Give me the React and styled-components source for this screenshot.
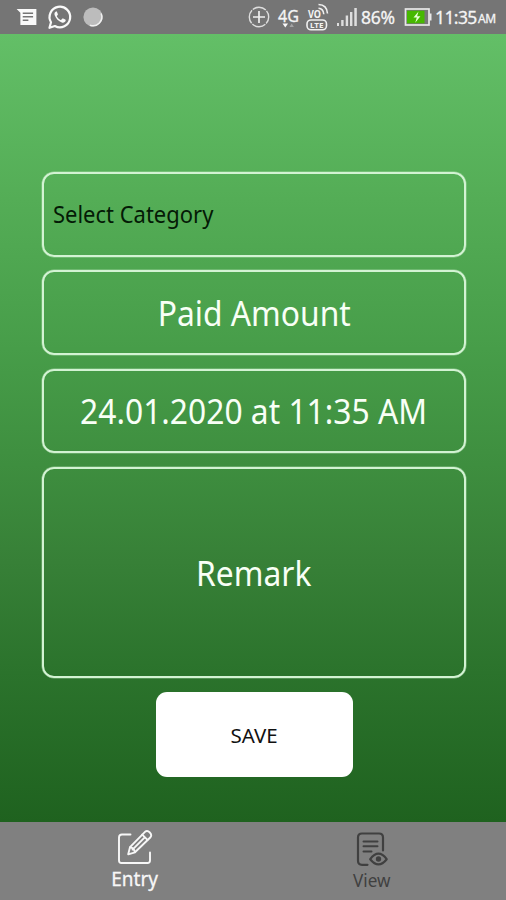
import React from "react";
import styled, { createGlobalStyle } from "styled-components";

const GlobalStyle = createGlobalStyle`
  * {
    box-sizing: border-box;
  }
  body {
    margin: 0;
    font-family: "Noto Sans", "Open Sans", sans-serif;
  }
`;

let Screen = styled.div`
  width: 506px;
  height: 900px;
  display: flex;
  flex-direction: column;
  overflow: hidden;
  background: #808080;
`;

let StatusBar = styled.header`
  height: 34px;
  flex: none;
  display: flex;
  align-items: center;
  justify-content: space-between;
  padding: 0 10px 0 16px;
  background: #757575;
  color: #f4f4f4;
  svg {
    display: block;
    flex: none;
    overflow: visible;
  }
`;

let Notifications = styled.div`
  display: flex;
  align-items: center;
  gap: 11px;
`;

let SystemIcons = styled.div`
  display: grid;
  grid-template-columns: 30px 28px 31px 24px 43px 31px 43px 18px;
  align-items: center;
`;

let StatusText = styled.span`
  font-size: ${(props) => props.$size || 17.5}px;
  line-height: 24px;
  padding-top: ${(props) => props.$top || 0}px;
  letter-spacing: ${(props) => props.$spacing || 0}px;
  white-space: nowrap;
  -webkit-text-stroke: 0.3px currentColor;
`;

let Form = styled.main`
  height: 788px;
  flex: none;
  display: flex;
  flex-direction: column;
  align-items: center;
  gap: 13.9px;
  padding: 138px 0 0 2px;
  background: linear-gradient(
    #63bf67 0%,
    #54ad56 21%,
    #479d49 40%,
    #3f9040 53%,
    #378037 67%,
    #2b732c 81%,
    #1f621f 100%
  );
`;

let Field = styled.div`
  width: 424px;
  height: ${(props) => props.$height || 84.5}px;
  flex: none;
  display: flex;
  align-items: center;
  justify-content: ${(props) => (props.$left ? "flex-start" : "center")};
  padding-left: ${(props) => props.$left || 0}px;
  border: 2px solid #d3f3d3;
  border-radius: 12px;
  box-shadow: 0 0 0 0.5px rgba(211, 243, 211, 0.5);
`;

let FieldText = styled.span`
  color: ${(props) => (props.$dark ? "#041a06" : "#f8fff6")};
  font-size: ${(props) => (props.$dark ? 23.5 : 34)}px;
  line-height: 40px;
  white-space: nowrap;
  transform: scaleX(0.935);
  transform-origin: ${(props) => (props.$dark ? "left" : "center")};
`;

let SaveButton = styled.button`
  width: 197px;
  height: 85px;
  flex: none;
  padding: 0;
  border: none;
  border-radius: 11px;
  background: #fff;
  color: #111;
  font-family: inherit;
  font-size: 20.5px;
`;

let TabBar = styled.nav`
  height: 78px;
  flex: none;
  display: flex;
  padding: 0 16px;
  background: #808080;
`;

let Tab = styled.div`
  flex: 1;
  display: flex;
  flex-direction: column;
  align-items: center;
  padding-top: ${(props) => (props.$active ? 6 : 7)}px;
  color: ${(props) => (props.$active ? "#f7f7f7" : "#404040")};
  svg {
    display: block;
  }
`;

let TabLabel = styled.span`
  margin-top: ${(props) => props.$top}px;
  font-size: ${(props) => props.$size}px;
  line-height: 24px;
  transform: scaleX(0.95);
  -webkit-text-stroke: ${(props) => props.$stroke || 0}px currentColor;
`;

let IconLabel = styled.text`
  font-family: "Noto Sans", sans-serif;
  font-weight: 700;
  fill: currentColor;
`;

function MessageIcon() {
  return (
    <svg width="21" height="16" viewBox="0 0 21 17">
      <path d="M0 0h21v17H4V4z" fill="#fafafa" />
      <path d="M6.500 4.500h11M6.500 8.300h11M6.500 12h6" stroke="#757575" strokeWidth="1.6" />
    </svg>
  );
}

function WhatsAppIcon() {
  return (
    <svg width="24" height="24" viewBox="0 0 24 24">
      <path
        d="M1.5 22.8 3 17.2A10.3 10.3 0 1 1 6.9 21z"
        fill="none"
        stroke="#fafafa"
        strokeWidth="2.2"
        strokeLinejoin="round"
      />
      <path
        d="M8.4 6.2c-1.7.6-2.4 2.2-1.7 4.1 1.2 3.3 3.8 6 7.1 7.2 1.9.6 3.4-.2 3.9-1.9.1-.6 0-.9-.4-1.1l-2.1-1c-.5-.2-.8-.1-1.1.3l-.8 1c-.2.2-.5.2-.8.1-1.6-.7-2.8-1.9-3.6-3.4-.1-.3-.1-.5.1-.7l.7-.9c.2-.3.2-.6.1-.9l-.8-2c-.2-.5-.4-.7-.6-.8z"
        fill="#fafafa"
      />
    </svg>
  );
}

function CircleIcon() {
  return (
    <svg width="20" height="20" viewBox="0 0 20 20">
      <circle cx="10" cy="10" r="9.6" fill="#bcbcbc" />
      <path
        d="M18.200 6.500A8.900 8.900 0 0 1 7 18.200"
        fill="none"
        stroke="#f0f0f0"
        strokeWidth="1.5"
      />
    </svg>
  );
}

function DataSaverIcon() {
  return (
    <svg width="22" height="22" viewBox="0 0 22 22" fill="none">
      <circle
        cx="11"
        cy="11"
        r="9.7"
        stroke="#dedede"
        strokeWidth="1.4"
        strokeDasharray="14.200 1.035"
        strokeDashoffset="7"
      />
      <path d="M11 5v12M5 11h12" stroke="#f0f0f0" strokeWidth="1.7" />
    </svg>
  );
}

function NetworkIcon() {
  return (
    <svg width="22" height="26" viewBox="0 0 22 26">
      <text
        x="0"
        y="18"
        fontSize="17"
        fill="#f4f4f4"
        stroke="#f4f4f4"
        strokeWidth=".3"
        textLength="21"
        lengthAdjust="spacingAndGlyphs"
      >
        4G
      </text>
      <path d="M4.500 19.500h5.500l-2.700 4z" fill="#fafafa" />
      <path d="M11.500 23l2.200-3.500 2.200 3.500z" fill="#a3a3a3" />
    </svg>
  );
}

function VolteIcon() {
  return (
    <svg width="22" height="28" viewBox="0 0 22 28" fill="none">
      <IconLabel
        x="2"
        y="14.5"
        fontSize="10"
        textLength="13"
        lengthAdjust="spacingAndGlyphs"
      >
        VO
      </IconLabel>
      <path
        d="M12.500 5.200q4.800.2 5.300 6M12.500 1.500q8.500.3 9 9"
        stroke="#f0f0f0"
        strokeWidth="1.6"
      />
      <rect
        x="1"
        y="17"
        width="19.500"
        height="9.8"
        rx="4"
        stroke="#f0f0f0"
        strokeWidth="1.600"
      />
      <IconLabel
        x="4"
        y="24.800"
        fontSize="7.5"
        textLength="13.5"
        lengthAdjust="spacingAndGlyphs"
      >
        LTE
      </IconLabel>
    </svg>
  );
}

function SignalIcon() {
  return (
    <svg width="20" height="18" viewBox="0 0 20 18" fill="#dedede">
      <rect x="0" y="15" width="2" height="3" />
      <rect x="4.2" y="12" width="2.4" height="6" />
      <rect x="8.700" y="7.500" width="2.400" height="10.500" />
      <rect x="13" y="4" width="2.400" height="14" />
      <rect x="17.300" y="0" width="2.500" height="18" />
    </svg>
  );
}

function BatteryIcon() {
  return (
    <svg width="28" height="18" viewBox="0 0 28 18">
      <rect
        x="1.5"
        y="1"
        width="23.5"
        height="16"
        fill="#777"
        stroke="#e8e8e8"
        strokeWidth="1.7"
      />
      <rect x="3" y="2.700" width="17.500" height="12.600" fill="#46b800" />
      <path d="M25.500 5.500h2v7h-2z" fill="#e8e8e8" />
      <path d="M14.500 3.500 9.500 9.500h3.300l-1.600 5.200 5.200-6.500h-3.300z" fill="#e9ffd9" />
    </svg>
  );
}

function EntryIcon() {
  return (
    <svg
      width="36"
      height="37"
      viewBox="0 0 36 37"
      fill="none"
      stroke="currentColor"
      strokeWidth="1.9"
      strokeLinecap="round"
      strokeLinejoin="round"
    >
      <path d="M13.500 6.500H5Q2 6.500 2 9.500v23q0 2.500 2.500 2.500h26q2.500 0 2.500-2.500V24.500" />
      <path d="M11.200 26.300l1.800-7.100L28 3.800q2.400-1.700 4.800.7t.7 4.700L18 24.300z" />
      <path d="M25.200 6.600l5.300 5.300M13.200 19.300q3.800.8 4.700 4.800M15.500 21.600 27.500 9.700" />
    </svg>
  );
}

function ViewIcon() {
  return (
    <svg
      width="34"
      height="37"
      viewBox="0 0 34 37"
      fill="none"
      stroke="currentColor"
      strokeWidth="2.2"
      strokeLinecap="round"
    >
      <path d="M12.500 35.800H7Q3 35.800 3 31.800V8.500q0-4 4-4h17Q28 4.500 28 8.500v13" />
      <path d="M8.500 12.500h14M8.500 17.300h14M8.500 22.500h8" strokeWidth="2" />
      <path d="M15.200 30.200q8.300-11 16.500 0-8.200 10.500-16.500 0z" strokeLinejoin="round" />
      <circle cx="23.500" cy="30" r="2.700" fill="currentColor" stroke="none" />
    </svg>
  );
}

function App() {
  return (
    <Screen>
      <GlobalStyle />
      <StatusBar>
        <Notifications>
          <MessageIcon />
          <WhatsAppIcon />
          <CircleIcon />
        </Notifications>
        <SystemIcons>
          <DataSaverIcon />
          <NetworkIcon />
          <VolteIcon />
          <SignalIcon />
          <StatusText $spacing={-0.3}>86%</StatusText>
          <BatteryIcon />
          <StatusText $spacing={-0.6}>11:35</StatusText>
          <StatusText $size={12} $top={3} $spacing={-0.4}>
            AM
          </StatusText>
        </SystemIcons>
      </StatusBar>
      <Form>
        <Field $left={9}>
          <FieldText $dark>Select Category</FieldText>
        </Field>
        <Field>
          <FieldText>Paid Amount</FieldText>
        </Field>
        <Field>
          <FieldText>24.01.2020 at 11:35 AM</FieldText>
        </Field>
        <Field $height={211}>
          <FieldText>Remark</FieldText>
        </Field>
        <SaveButton>SAVE</SaveButton>
      </Form>
      <TabBar>
        <Tab $active>
          <EntryIcon />
          <TabLabel $size={20} $top={2} $stroke={0.3}>
            Entry
          </TabLabel>
        </Tab>
        <Tab>
          <ViewIcon />
          <TabLabel $size={18} $top={2}>
            View
          </TabLabel>
        </Tab>
      </TabBar>
    </Screen>
  );
}

export default App;
